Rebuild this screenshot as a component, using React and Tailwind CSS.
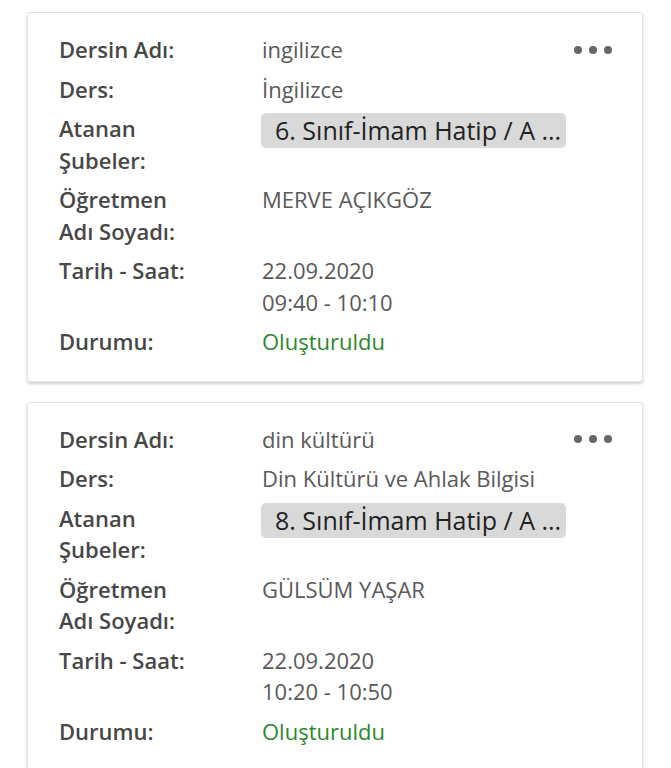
import React from "react";

const lessons = [
  {
    name: "ingilizce",
    course: "İngilizce",
    branch: "6. Sınıf-İmam Hatip / A ...",
    teacher: "MERVE AÇIKGÖZ",
    date: "22.09.2020",
    time: "09:40 - 10:10",
    status: "Oluşturuldu",
  },
  {
    name: "din kültürü",
    course: "Din Kültürü ve Ahlak Bilgisi",
    branch: "8. Sınıf-İmam Hatip / A ...",
    teacher: "GÜLSÜM YAŞAR",
    date: "22.09.2020",
    time: "10:20 - 10:50",
    status: "Oluşturuldu",
  },
];

const Row = ({ label, children }) => (
  <div className="grid grid-cols-[203px_1fr]">
    <div className="font-semibold text-[#474747]">{label}</div>
    <div className="text-[#595959] min-w-0">{children}</div>
  </div>
);

const Dots = () => (
  <div className="flex items-center gap-[7px] -mr-[2px]">
    {[0, 1, 2].map((i) => (
      <span key={i} className="w-[8px] h-[8px] rounded-full bg-[#666]" />
    ))}
  </div>
);

const LessonCard = ({ item }) => (
  <div className="bg-white border border-[#e3e3e3] rounded-[3px] shadow-[0_2px_3px_rgba(0,0,0,0.18)] pl-[31px] pr-[32px] pt-[21px] pb-[23px]">
    <div className="flex flex-col gap-2">
      <Row label="Dersin Adı:">
        <div className="flex items-center justify-between">
          <span>{item.name}</span>
          <Dots />
        </div>
      </Row>
      <Row label="Ders:">{item.course}</Row>
      <Row
        label={
          <>
            Atanan
            <br />
            Şubeler:
          </>
        }
      >
        <span className="inline-block bg-[#d9d9d9] text-[#222] text-[25px] rounded-[5px] h-[35px] leading-[35px] pl-[14px] pr-[8px] w-[305px] -ml-[1px] whitespace-nowrap overflow-hidden">
          {item.branch}
        </span>
      </Row>
      <Row
        label={
          <>
            Öğretmen
            <br />
            Adı Soyadı:
          </>
        }
      >
        {item.teacher}
      </Row>
      <Row label="Tarih - Saat:">
        {item.date}
        <br />
        {item.time}
      </Row>
      <Row label="Durumu:">
        <span className="text-[#2b8a2b]">{item.status}</span>
      </Row>
    </div>
  </div>
);

export default function App() {
  return (
    <div
      className="min-h-screen bg-white px-[27px] pt-[12px] pb-6 text-[22px] leading-[31.5px]"
      style={{ fontFamily: '"Open Sans", "Noto Sans", sans-serif' }}
    >
      <div className="flex flex-col gap-5 w-[616px]">
        {lessons.map((item, i) => (
          <LessonCard key={i} item={item} />
        ))}
      </div>
    </div>
  );
}
